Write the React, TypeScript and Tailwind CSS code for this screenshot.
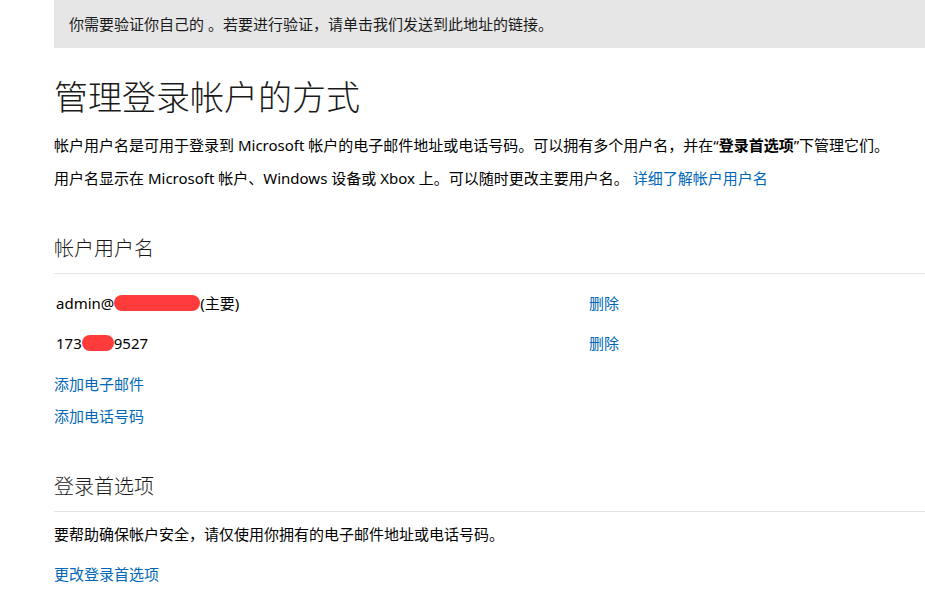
import React from "react";

const font = { fontFamily: '"Noto Sans", "Noto Sans CJK SC", sans-serif' };

export default function App() {
  return (
    <div className="min-h-[603px] w-full bg-white pl-[54px] text-[15px] text-[#000]" style={font}>
      <div className="flex h-[48px] items-center bg-[#e6e6e6] pl-[15px] text-[15px] text-[#1a1a1a]">
        你需要验证你自己的 。若要进行验证，请单击我们发送到此地址的链接。
      </div>

      <h1 className="mt-[26px] text-[34px] font-light leading-[46px] text-[#1a1a1a]">管理登录帐户的方式</h1>

      <p className="mt-[9px] leading-[33px]">
        帐户用户名是可用于登录到 Microsoft 帐户的电子邮件地址或电话号码。可以拥有多个用户名，并在“<b className="font-semibold">登录首选项</b>”下管理它们。
      </p>
      <p className="leading-[33px]">
        用户名显示在 Microsoft 帐户、Windows 设备或 Xbox 上。可以随时更改主要用户名。 <span className="text-[#0067b8]">详细了解帐户用户名</span>
      </p>

      <h2 className="mt-[40px] text-[20px] font-light leading-[28px] text-[#1a1a1a]">帐户用户名</h2>
      <div className="mt-[10px] h-px bg-[#e6e6e6]" />

      <div className="mt-[17px] flex h-[24px] items-center">
        <div className="flex w-[535px] items-center pl-[2px]">
          <span>admin@</span>
          <span className="inline-block h-[16px] w-[86px] rounded-full bg-[#ff3b3b]" />
          <span>(主要)</span>
        </div>
        <span className="text-[#0067b8]">删除</span>
      </div>
      <div className="mt-[16px] flex h-[24px] items-center">
        <div className="flex w-[535px] items-center pl-[2px]">
          <span>173</span>
          <span className="inline-block h-[16px] w-[32px] rounded-full bg-[#ff3b3b]" />
          <span>9527</span>
        </div>
        <span className="text-[#0067b8]">删除</span>
      </div>
      <div className="mt-[13px] leading-[32px] text-[#0067b8]">添加电子邮件</div>
      <div className="leading-[32px] text-[#0067b8]">添加电话号码</div>

      <h2 className="mt-[41px] text-[20px] font-light leading-[28px] text-[#1a1a1a]">登录首选项</h2>
      <div className="mt-[10px] h-px bg-[#e6e6e6]" />
      <p className="mt-[8px] leading-[28px]">要帮助确保帐户安全，请仅使用你拥有的电子邮件地址或电话号码。</p>
      <div className="mt-[12px] leading-[28px] text-[#0067b8]">更改登录首选项</div>
    </div>
  );
}
